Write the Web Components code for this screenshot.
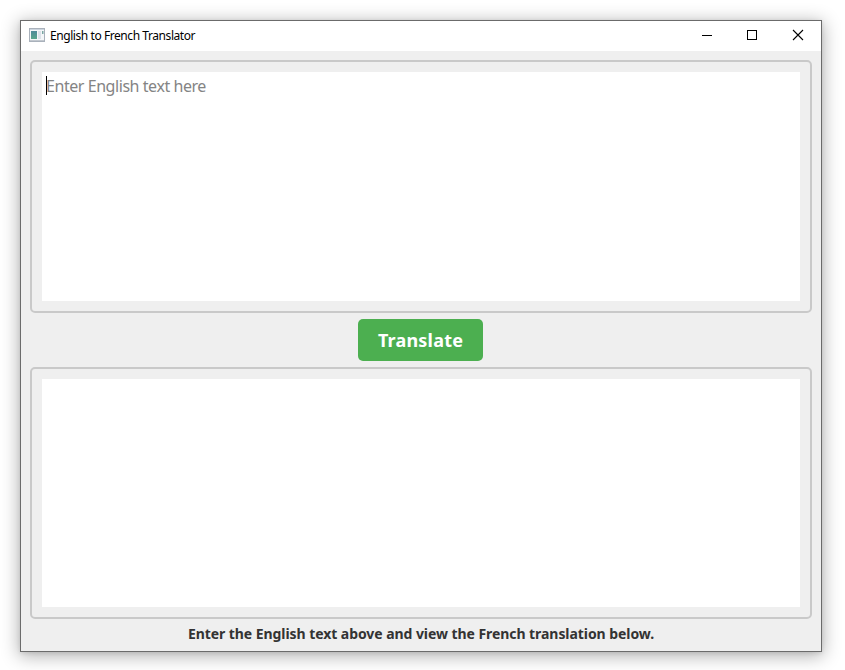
<!DOCTYPE html>
<html lang="en">
<head>
<meta charset="utf-8">
<title>English to French Translator</title>
<style>
html,body{margin:0;height:100%;background:#fff;overflow:hidden}
body{box-sizing:border-box;padding:20px 23px 18px 20px}
</style>
</head>
<body>
<app-window>
  <title-bar slot="title">English to French Translator</title-bar>
  <text-panel caret style="height:253px">Enter English text here</text-panel>
  <push-button>Translate</push-button>
  <text-panel style="height:252px"></text-panel>
  <hint-label>Enter the English text above and view the French translation below.</hint-label>
</app-window>
<script>
const define = (name, html) => customElements.define(name, class extends HTMLElement {
  constructor() {
    super();
    this.attachShadow({mode: 'open'}).innerHTML = html;
  }
});

define('app-window', `<style>
:host{display:flex;flex-direction:column;box-sizing:border-box;width:802px;height:632px;border:1px solid #6b6b6b;background:#efefef;
box-shadow:0 3px 17px 1px rgba(0,0,0,.31),0 1px 4px rgba(0,0,0,.1)}
.body{flex:1;display:flex;flex-direction:column;align-items:center;padding:9px 9px 0;gap:6px}
</style><slot name="title"></slot><div class="body"><slot></slot></div>`);

define('title-bar', `<style>
:host{display:flex;align-items:center;height:30px;flex:none;background:#fff;color:#000;font:12px/16px "Noto Sans",sans-serif}
.icon{margin:-3px 5px 0 8px;flex:none}
.name{flex:1;white-space:nowrap;letter-spacing:-.43px}
.controls{display:flex;align-self:stretch}
.controls svg{display:block}
</style>
<svg class="icon" width="16" height="14" viewBox="0 0 16 14">
<defs><linearGradient id="g" x2="0" y2="1"><stop stop-color="#4f8a99"/><stop offset="1" stop-color="#59a68c"/></linearGradient></defs>
<rect x=".5" y=".5" width="15" height="13" fill="#f4f6f8" stroke="#a9b1bb"/>
<path d="M1 1.5h14" stroke="#ccd5df"/>
<rect x="2" y="3" width="6" height="8" fill="url(#g)"/>
<rect x="9" y="3" width="3" height="8" fill="#dce2e9"/>
<rect x="13" y="3" width="1.5" height="3" fill="#7ba7a3"/>
<path d="M1 12.5h14" stroke="#c2c8cf"/>
</svg>
<span class="name"><slot></slot></span>
<div class="controls">
<svg width="46" height="30" shape-rendering="crispEdges"><path d="M18 14.5h10" stroke="#000"/></svg>
<svg width="46" height="30" shape-rendering="crispEdges"><path d="M17.500 9.500h9v9h-9z" fill="none" stroke="#000"/></svg>
<svg width="45" height="30"><path d="M17 9l10 10M27 9l-10 10" stroke="#000" stroke-width="1.1"/></svg>
</div>`);

define('text-panel', `<style>
:host{display:flex;box-sizing:border-box;width:782px;flex:none;border:2px solid #c9c9c9;border-radius:5px;padding:10px}
.area{flex:1;background:#fff;color:#848484;padding:4px;font:16px/20px "Noto Sans",sans-serif;letter-spacing:-.44px;white-space:nowrap}
:host([caret]) .area::before{content:"";display:inline-block;width:1px;height:19px;margin-right:-1px;background:#000;vertical-align:top}
</style><div class="area"><slot></slot></div>`);

define('push-button', `<style>
:host{display:block;flex:none;margin-right:1px}
button{display:block;width:125px;height:42px;padding:0 0 1px;border:0;border-radius:5px;background:#4caf50;color:#fff;font:bold 18px/40px "Noto Sans",sans-serif;letter-spacing:.2px}
</style><button><slot></slot></button>`);

define('hint-label', `<style>
:host{display:block;flex:none;color:#333;font:bold 14px/18px "Noto Sans",sans-serif;white-space:nowrap;letter-spacing:-.06px}
</style><slot></slot>`);
</script>
</body>
</html>
